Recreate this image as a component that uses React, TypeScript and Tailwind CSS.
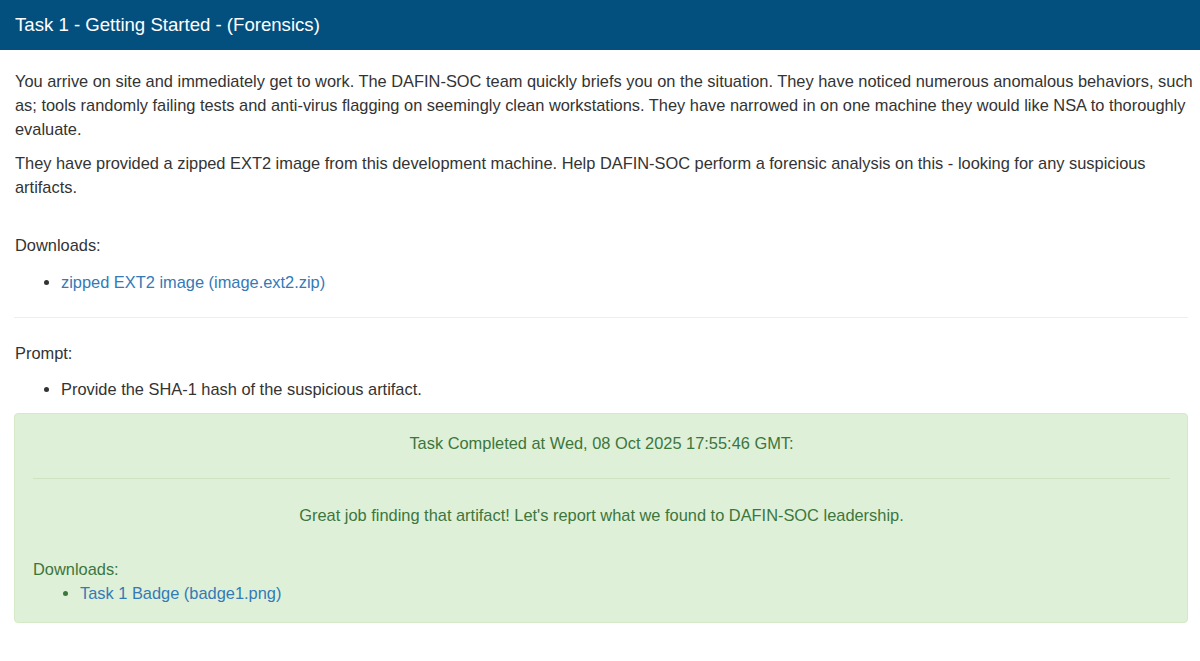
export default function App() {
  return (
    <div className="min-h-[661px] bg-white font-['Liberation_Sans',Arial,sans-serif] text-[16.4px] leading-6 text-[#333]">
      {/* title bar */}
      <div className="flex h-[50px] items-center bg-[#03507f] px-[15px] text-[18.6px] text-white">
        Task 1 - Getting Started - (Forensics)
      </div>

      <div className="px-[12px] pt-[19px]">
        <p className="mb-[10px] mr-[-8px] pl-[3px]">
          You arrive on site and immediately get to work. The DAFIN-SOC team quickly briefs you on the situation. They have noticed numerous anomalous behaviors, such as; tools randomly failing tests and anti-virus flagging on seemingly clean workstations. They have narrowed in on one machine they would like NSA to thoroughly evaluate.
        </p>
        <p className="pl-[3px]">
          They have provided a zipped EXT2 image from this development machine. Help DAFIN-SOC perform a forensic analysis on this - looking for any suspicious artifacts.
        </p>

        <div className="mt-[34px] pl-[3px]">Downloads:</div>
        <ul className="mt-[13px] list-disc pl-[49px]">
          <li>
            <a href="#" className="text-[#337ab7]">zipped EXT2 image (image.ext2.zip)</a>
          </li>
        </ul>

        <hr className="ml-[2px] mt-[23px] border-t border-[#eee]" />

        <div className="mt-[23px] pl-[3px]">Prompt:</div>
        <ul className="mt-[12px] list-disc pl-[49px]">
          <li>Provide the SHA-1 hash of the suspicious artifact.</li>
        </ul>

        {/* completed alert */}
        <div className="ml-[2px] mt-[12px] rounded-[4px] border border-[#d6e9c6] bg-[#dff0d8] pb-[17px] pl-[18px] pr-[17px] pt-[17px] text-[#3c763d]">
          <div className="text-center">Task Completed at Wed, 08 Oct 2025 17:55:46 GMT:</div>
          <hr className="mt-[23px] border-t border-[#cfe3c3]" />
          <div className="mt-[24px] text-center">
            Great job finding that artifact! Let's report what we found to DAFIN-SOC leadership.
          </div>
          <div className="mt-[30px]">Downloads:</div>
          <ul className="list-disc pl-[47px]">
            <li>
              <a href="#" className="text-[#337ab7]">Task 1 Badge (badge1.png)</a>
            </li>
          </ul>
        </div>
      </div>
    </div>
  );
}
